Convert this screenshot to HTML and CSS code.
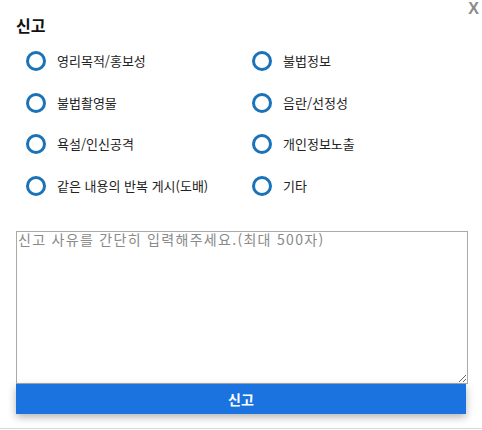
FILE: index.html
```html
<!DOCTYPE html>
<html lang="ko">
<head>
<meta charset="utf-8">
<title>신고</title>
<link rel="stylesheet" href="styles.css">
</head>
<body>
<div class="dialog">
  <button class="close" type="button">X</button>
  <h2 class="title">신고</h2>
  <div class="options">
    <label class="option"><span class="radio"></span><span class="label">영리목적/홍보성</span></label>
    <label class="option"><span class="radio"></span><span class="label">불법정보</span></label>
    <label class="option"><span class="radio"></span><span class="label">불법촬영물</span></label>
    <label class="option"><span class="radio"></span><span class="label">음란/선정성</span></label>
    <label class="option"><span class="radio"></span><span class="label">욕설/인신공격</span></label>
    <label class="option"><span class="radio"></span><span class="label">개인정보노출</span></label>
    <label class="option"><span class="radio"></span><span class="label">같은 내용의 반복 게시(도배)</span></label>
    <label class="option"><span class="radio"></span><span class="label">기타</span></label>
  </div>
  <textarea class="reason" placeholder="신고 사유를 간단히 입력해주세요.(최대 500자)"></textarea>
  <button class="submit" type="button">신고</button>
</div>
</body>
</html>
```
FILE: styles.css
```css
html, body {
  margin: 0;
  padding: 0;
  background: #fff;
}
body {
  font-family: "Noto Sans CJK KR", "Noto Sans", sans-serif;
  color: #222;
}
.dialog {
  position: relative;
  box-sizing: border-box;
  height: 429px;
  padding: 14px 16px 0 16px;
  border-bottom: 1px solid #dcdcdc;
}
.close {
  position: absolute;
  top: 0;
  right: 3px;
  border: none;
  background: none;
  padding: 0;
  font-family: "Liberation Sans", Arial, sans-serif;
  font-weight: bold;
  font-size: 16px;
  color: #8a8a8a;
  line-height: 18px;
}
.title {
  margin: 0;
  font-size: 16px;
  font-weight: bold;
  line-height: 22px;
  color: #111;
}
.options {
  display: grid;
  grid-template-columns: 226px 1fr;
  grid-auto-rows: 41.7px;
  margin-top: 4px;
  padding-left: 10px;
}
.option {
  display: flex;
  align-items: center;
  gap: 11px;
}
.radio {
  box-sizing: border-box;
  width: 20px;
  height: 20px;
  border: 3px solid #1a72b9;
  border-radius: 50%;
  flex: none;
}
.label {
  font-size: 13px;
  color: #222;
  line-height: 18px;
}
.reason {
  display: block;
  box-sizing: border-box;
  width: 452px;
  height: 153px;
  margin: 24px 0 0 0;
  padding: 0 1px;
  border: 1px solid #aaa;
  font-family: "Noto Sans CJK KR", monospace;
  font-size: 14px;
  line-height: 15px;
  letter-spacing: 1.3px;
  color: #333;
}
.reason::placeholder {
  color: #8a8a8a;
}
.submit {
  display: block;
  width: 450px;
  height: 30px;
  margin: 0;
  padding: 0;
  border: none;
  background: #1b73df;
  color: #fff;
  font-family: "Noto Sans CJK KR", sans-serif;
  font-weight: bold;
  font-size: 14px;
  box-shadow: 0 3px 8px rgba(0, 0, 0, 0.3);
}
```
